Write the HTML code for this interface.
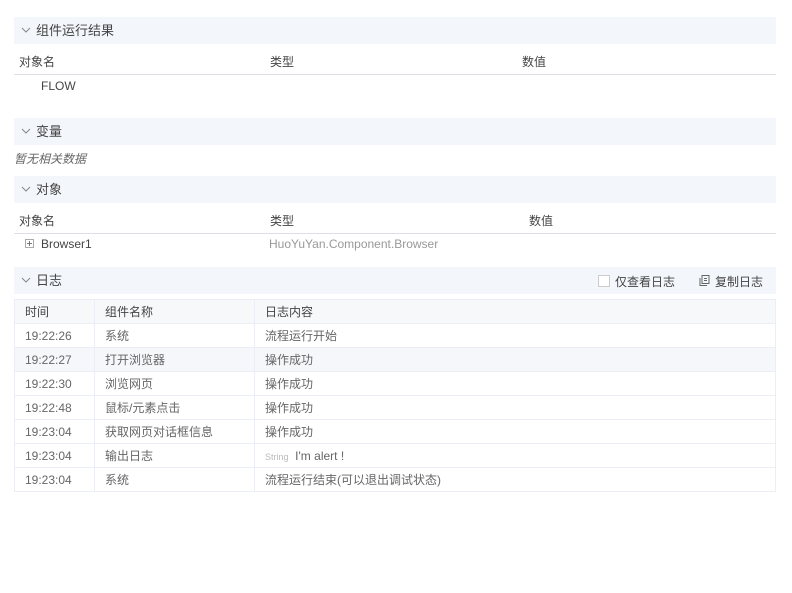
<!DOCTYPE html>
<html><head><meta charset="utf-8"><style>
*{margin:0;padding:0;box-sizing:border-box}
body{width:792px;height:593px;background:#fff;font-family:"Liberation Sans","Noto Sans CJK SC",sans-serif;font-size:12px;color:#444;position:relative;overflow:hidden}
.a{position:absolute}
.bar{position:absolute;left:14px;width:762px;height:27px;background:#f3f6fb;font-size:13px;color:#444;line-height:27px;padding-left:22px}
.bar svg{position:absolute;left:7px;top:10px}
.th{position:absolute;left:14px;width:762px;height:26px;border-bottom:1px solid #dcdfe6;line-height:26px;color:#444}
.th span{position:absolute}
table{position:absolute;left:14px;top:299px;width:762px;border-collapse:collapse}
td{border:1px solid #ebeef5;height:24px;padding:0 10px;color:#666;font-size:12px}
tr.h td{background:#f7f8fa;color:#444}
tr.s td{background:#f5f7fa}
</style></head><body>
<div class="bar" style="top:17px"><svg width="10" height="6" viewBox="0 0 10 6"><path d="M1 1l4 4 4-4" fill="none" stroke="#888" stroke-width="1"/></svg>组件运行结果</div>
<div class="th" style="top:49px"><span style="left:5px">对象名</span><span style="left:256px">类型</span><span style="left:508px">数值</span></div>
<div class="a" style="left:41px;top:79px">FLOW</div>
<div class="bar" style="top:118px"><svg width="10" height="6" viewBox="0 0 10 6"><path d="M1 1l4 4 4-4" fill="none" stroke="#888" stroke-width="1"/></svg>变量</div>
<div class="a" style="left:14px;top:150px;font-style:italic;color:#666">暂无相关数据</div>
<div class="bar" style="top:176px"><svg width="10" height="6" viewBox="0 0 10 6"><path d="M1 1l4 4 4-4" fill="none" stroke="#888" stroke-width="1"/></svg>对象</div>
<div class="th" style="top:208px"><span style="left:5px">对象名</span><span style="left:256px">类型</span><span style="left:515px">数值</span></div>
<svg class="a" style="left:25px;top:239px" width="9" height="9" viewBox="0 0 9 9"><rect x="0.5" y="0.5" width="8" height="8" fill="none" stroke="#aaa"/><path d="M2 4.5h5M4.5 2v5" stroke="#777"/></svg>
<div class="a" style="left:41px;top:237px">Browser1</div>
<div class="a" style="left:269px;top:237px;color:#999">HuoYuYan.Component.Browser</div>
<div class="bar" style="top:267px"><svg width="10" height="6" viewBox="0 0 10 6"><path d="M1 1l4 4 4-4" fill="none" stroke="#888" stroke-width="1"/></svg>日志</div>
<div class="a" style="left:598px;top:275px;width:12px;height:12px;border:1px solid #ccc;background:#fff"></div>
<div class="a" style="left:615px;top:273px">仅查看日志</div>
<svg class="a" style="left:699px;top:275px" width="11" height="11" viewBox="0 0 11 11"><rect x="3" y="0.5" width="7" height="8" fill="none" stroke="#666"/><path d="M1 3v7.5h7" fill="none" stroke="#666"/><path d="M5 3.5h3M5 5.5h3" stroke="#666"/></svg>
<div class="a" style="left:715px;top:273px">复制日志</div>
<table>
<colgroup><col style="width:80px"><col style="width:160px"><col></colgroup>
<tr class="h"><td>时间</td><td>组件名称</td><td>日志内容</td></tr>
<tr><td>19:22:26</td><td>系统</td><td>流程运行开始</td></tr>
<tr class="s"><td>19:22:27</td><td>打开浏览器</td><td>操作成功</td></tr>
<tr><td>19:22:30</td><td>浏览网页</td><td>操作成功</td></tr>
<tr><td>19:22:48</td><td>鼠标/元素点击</td><td>操作成功</td></tr>
<tr><td>19:23:04</td><td>获取网页对话框信息</td><td>操作成功</td></tr>
<tr><td>19:23:04</td><td>输出日志</td><td><span style="font-size:9px;color:#bbb">String</span>&nbsp; I'm alert !</td></tr>
<tr><td>19:23:04</td><td>系统</td><td>流程运行结束(可以退出调试状态)</td></tr>
</table>
</body></html>
